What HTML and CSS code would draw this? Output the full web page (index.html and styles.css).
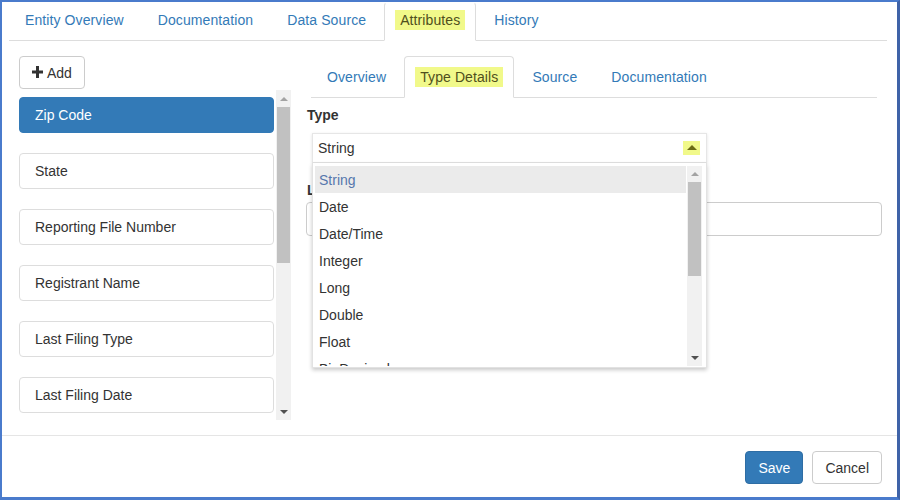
FILE: index.html
```html
<!DOCTYPE html>
<html>
<head>
<meta charset="utf-8">
<link rel="stylesheet" href="styles.css">
</head>
<body>
<div class="window">
  <div class="main">
    <ul class="tabs top-tabs">
      <li class="tab">Entity Overview</li>
      <li class="tab">Documentation</li>
      <li class="tab">Data Source</li>
      <li class="tab active"><span class="hl">Attributes</span></li>
      <li class="tab">History</li>
    </ul>
    <div class="body">
      <div class="left-col">
        <button class="btn btn-default add-btn"><svg class="plus" width="11" height="12" viewBox="0 0 11 12"><rect x="4" y="0" width="3" height="12" fill="#333"/><rect x="0" y="4.5" width="11" height="3" fill="#333"/></svg>Add</button>
        <div class="list-wrap">
          <div class="list">
            <div class="item active">Zip Code</div>
            <div class="item">State</div>
            <div class="item">Reporting File Number</div>
            <div class="item">Registrant Name</div>
            <div class="item">Last Filing Type</div>
            <div class="item">Last Filing Date</div>
          </div>
          <div class="sb sb-left">
            <div class="sb-btn"><span class="tri-up"></span></div>
            <div class="sb-thumb thumb-left"></div>
            <div class="sb-fill"></div>
            <div class="sb-btn"><span class="tri-down"></span></div>
          </div>
        </div>
      </div>
      <div class="right-col">
        <ul class="tabs inner-tabs">
          <li class="tab">Overview</li>
          <li class="tab active"><span class="hl">Type Details</span></li>
          <li class="tab">Source</li>
          <li class="tab">Documentation</li>
        </ul>
        <label class="lbl lbl-type">Type</label>
        <div class="select-wrap">
          <div class="select">
            <span>String</span>
            <span class="caret-box"><span class="caret-up"></span></span>
          </div>
          <div class="dropdown">
            <div class="options">
              <div class="opt sel">String</div>
              <div class="opt">Date</div>
              <div class="opt">Date/Time</div>
              <div class="opt">Integer</div>
              <div class="opt">Long</div>
              <div class="opt">Double</div>
              <div class="opt">Float</div>
              <div class="opt">BigDecimal</div>
            </div>
            <div class="sb sb-drop">
              <div class="sb-btn sb-btn-drop"><span class="tri-up"></span></div>
              <div class="sb-thumb thumb-drop"></div>
              <div class="sb-fill"></div>
              <div class="sb-btn sb-btn-drop"><span class="tri-down"></span></div>
            </div>
          </div>
        </div>
        <label class="lbl lbl-length">Length</label>
        <div class="input"></div>
      </div>
    </div>
  </div>
  <div class="footer">
    <button class="btn btn-primary">Save</button>
    <button class="btn btn-default">Cancel</button>
  </div>
</div>
</body>
</html>
```

FILE: styles.css
```css
* { box-sizing: border-box; }
html, body { margin: 0; padding: 0; }
body {
  font-family: "Liberation Sans", Arial, sans-serif;
  font-size: 14px;
  line-height: 20px;
  color: #333;
  background: #fff;
}
.window {
  width: 900px;
  height: 500px;
  border-style: solid;
  border-color: #4a7bcc;
  border-width: 2px 3px 3px 2px;
  border-right-color: #3f63a8;
  display: flex;
  flex-direction: column;
  overflow: hidden;
}
.main {
  padding: 0 10px 0 7px;
  height: 433px;
}
.tabs {
  list-style: none;
  margin: 0;
  padding: 0;
  display: flex;
  border-bottom: 1px solid #ddd;
}
.tab {
  color: #337ab7;
  border: 1px solid transparent;
  border-radius: 4px 4px 0 0;
  margin-right: 2px;
  margin-bottom: -1px;
  white-space: nowrap;
  letter-spacing: 0.1px;
}
.tab.active {
  border-color: #ddd;
  border-bottom-color: #fff;
  background: #fff;
  color: #555;
}
.top-tabs .tab { padding: 7px 15px 10px; }
.top-tabs .tab.active { border-top-color: transparent; }
.hl {
  background: #f1f98a;
  padding: 2px 5px;
  margin: 0 -5px;
  color: #4f4f1c;
}
.body {
  display: flex;
  gap: 15px;
  padding: 15px 5px 0 10px;
}
.left-col {
  width: 272px;
  flex: none;
  display: flex;
  flex-direction: column;
  align-items: flex-start;
}
.btn {
  font-family: inherit;
  font-size: 14px;
  line-height: 20px;
  padding: 6px 12px;
  border: 1px solid #ccc;
  border-radius: 4px;
  background: #fff;
  color: #333;
  height: 33px;
  display: inline-flex;
  align-items: center;
}
.btn-primary {
  background: #337ab7;
  border-color: #2e6da4;
  color: #fff;
}
.add-btn .plus { margin-right: 4px; margin-top: -1px; }
.list-wrap {
  margin-top: 1px;
  height: 330px;
  width: 272px;
  display: flex;
  gap: 2px;
}
.list {
  width: 255px;
  overflow: hidden;
  padding-top: 7px;
  display: flex;
  flex-direction: column;
  gap: 20px;
}
.item {
  flex: none;
  height: 36px;
  border: 1px solid #ddd;
  border-radius: 4px;
  padding: 7px 15px;
  background: #fff;
}
.item.active {
  background: #337ab7;
  border-color: #337ab7;
  color: #fff;
}
.sb {
  width: 15px;
  flex: none;
  background: #f1f1f1;
  display: flex;
  flex-direction: column;
}
.sb-btn {
  height: 17px;
  display: flex;
  align-items: center;
  justify-content: center;
  flex: none;
}
.sb-btn-drop { height: 16px; }
.sb-thumb {
  background: #c1c1c1;
  margin: 0 1px;
  flex: none;
}
.thumb-left { height: 156px; }
.thumb-drop { height: 94px; }
.sb-fill { flex: 1; }
.tri-up {
  width: 0; height: 0;
  border-left: 4px solid transparent;
  border-right: 4px solid transparent;
  border-bottom: 4px solid #a3a3a3;
}
.tri-down {
  width: 0; height: 0;
  border-left: 4px solid transparent;
  border-right: 4px solid transparent;
  border-top: 4px solid #505050;
}
.right-col {
  flex: 1;
  display: flex;
  flex-direction: column;
  align-items: flex-start;
}
.inner-tabs {
  align-self: stretch;
  margin: 0 5px;
}
.inner-tabs .tab { padding: 10px 15px 10px; }
.lbl {
  font-weight: bold;
  display: block;
  padding-left: 1px;
}
.lbl-type { margin: 7px 0 8px; }
.select-wrap {
  position: relative;
  margin-left: 6px;
  width: 395px;
  z-index: 5;
}
.select {
  height: 30px;
  border: 1px solid #e6e6e6;
  border-bottom-color: #e2e2e2;
  box-shadow: 0 1px 3px rgba(0, 0, 0, 0.12);
  background: #fff;
  display: flex;
  align-items: center;
  justify-content: space-between;
  padding: 0 6px 1px 5px;
}
.caret-box {
  width: 17px;
  height: 14px;
  background: #f1f98a;
  display: flex;
  align-items: center;
  justify-content: center;
}
.caret-up {
  width: 0; height: 0;
  border-left: 5px solid transparent;
  border-right: 5px solid transparent;
  border-bottom: 5px solid #6b6b14;
}
.dropdown {
  position: absolute;
  top: 100%;
  left: 0;
  width: 395px;
  height: 205px;
  background: #fff;
  border: 1px solid #e2e2e2;
  border-top: none;
  box-shadow: 0 2px 4px rgba(0, 0, 0, 0.22);
  padding: 3px 4px 1px 2px;
  display: flex;
  gap: 1px;
}
.options {
  flex: 1;
  overflow: hidden;
}
.opt {
  height: 27px;
  line-height: 28px;
  padding-left: 4px;
  color: #333;
}
.opt.sel {
  background: #ebebeb;
  color: #5677ad;
}
.lbl-length { margin: 17px 0 2px; }
.input {
  align-self: stretch;
  height: 34px;
  border: 1px solid #ccc;
  border-radius: 4px;
  background: #fff;
}
.footer {
  border-top: 1px solid #e5e5e5;
  flex: 1;
  display: flex;
  justify-content: flex-end;
  gap: 9px;
  padding: 15px 15px 0;
}
```
